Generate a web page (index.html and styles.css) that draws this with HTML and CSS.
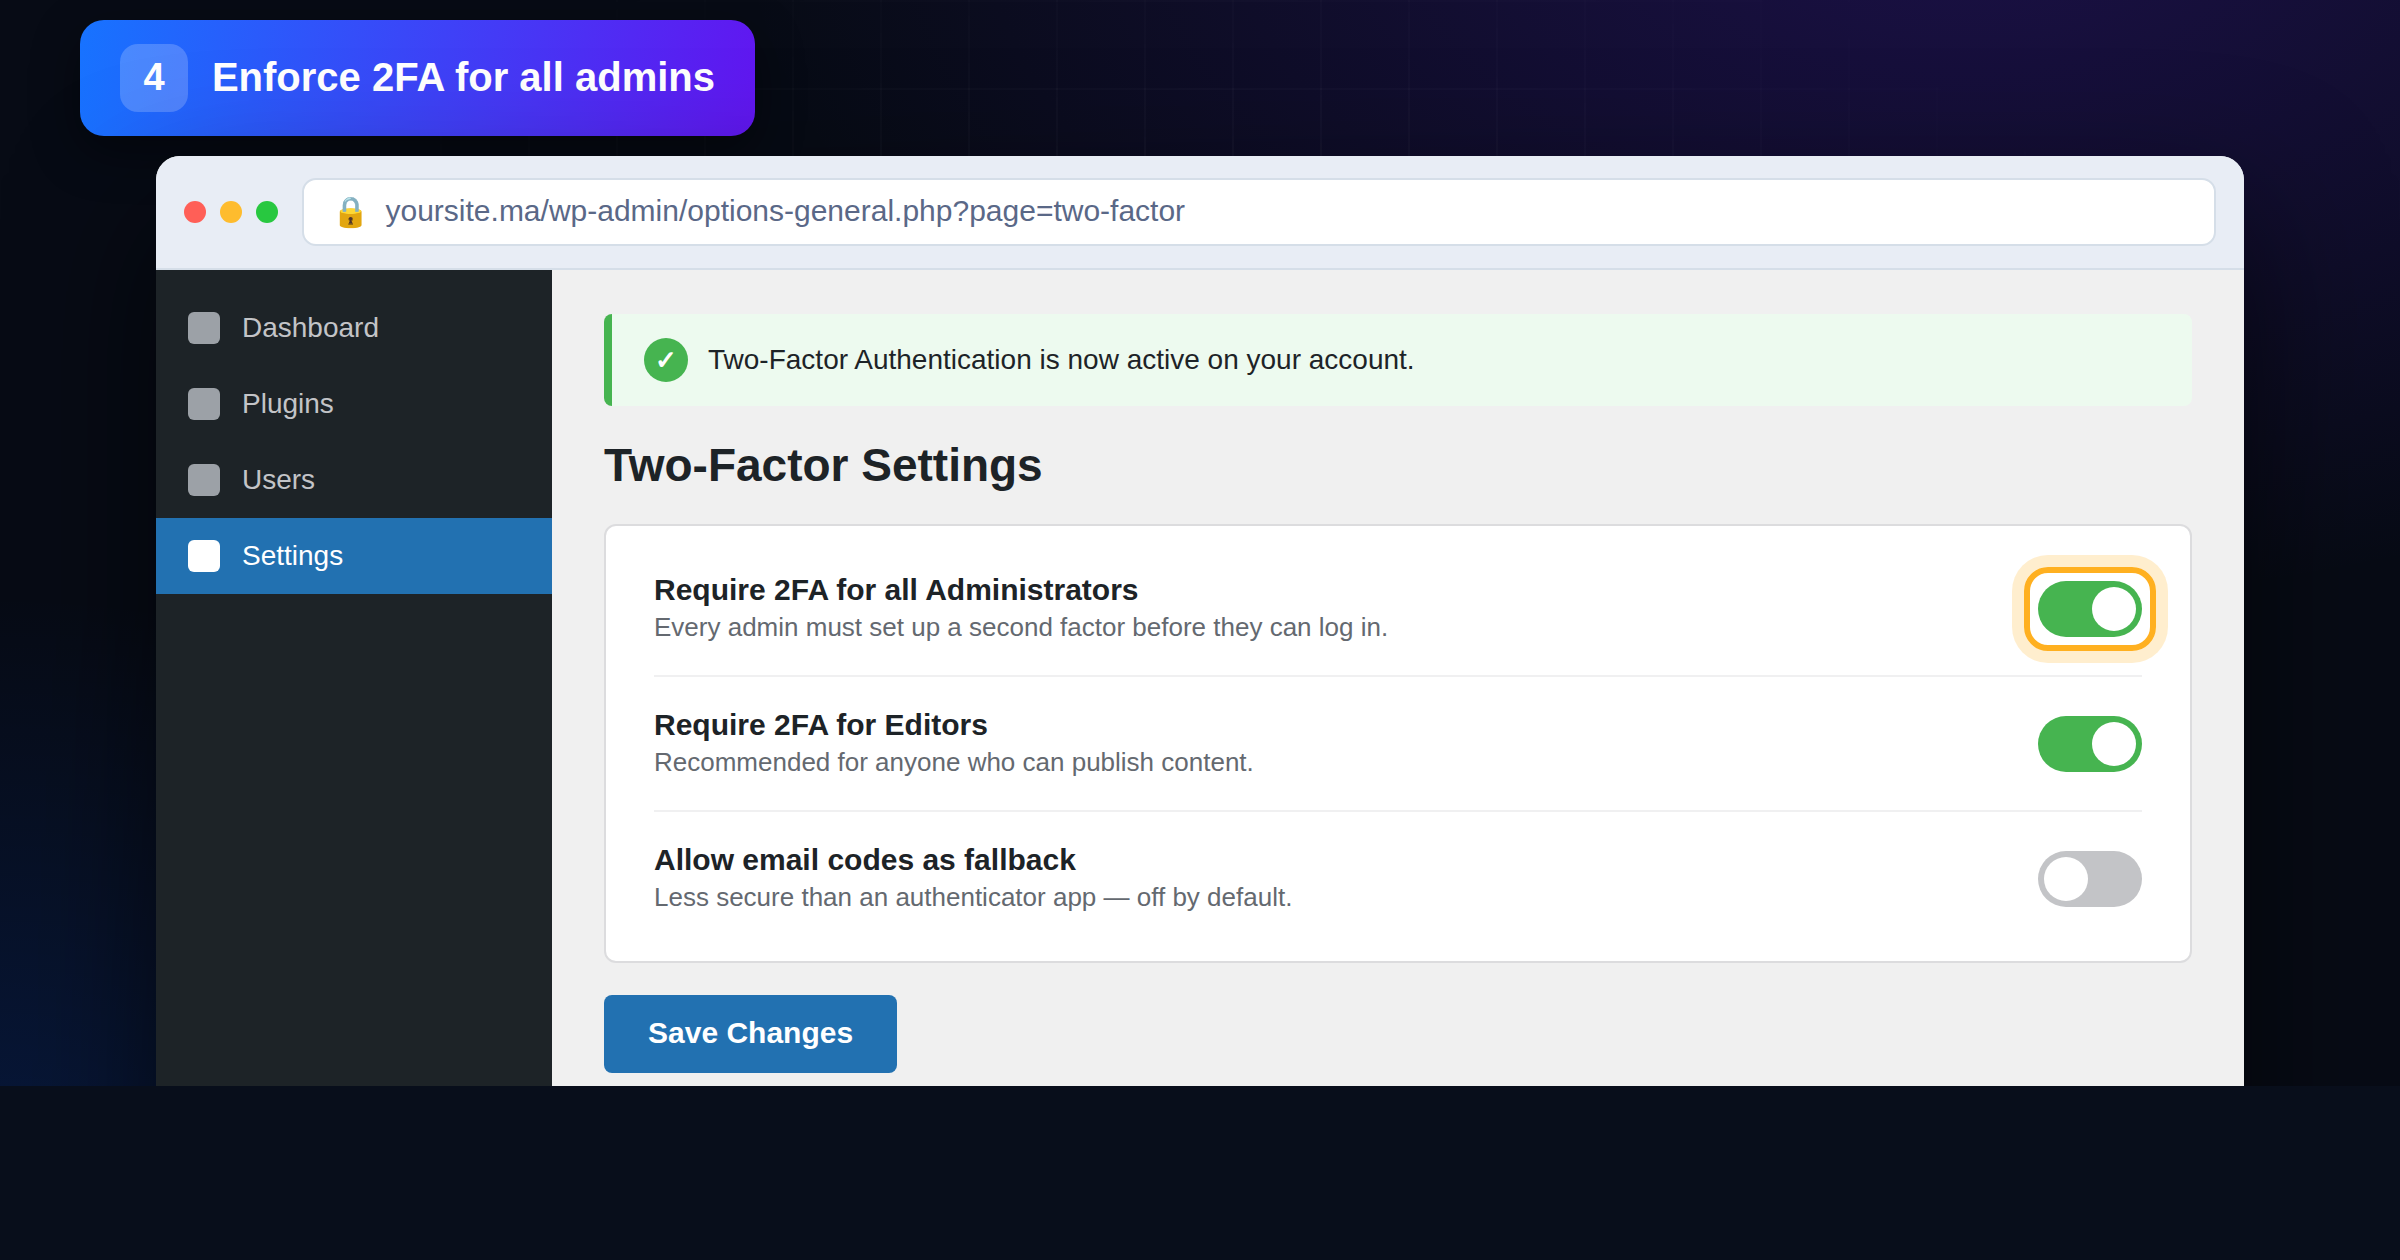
FILE: index.html
```html
<!DOCTYPE html>
<html lang="en">
<head>
<meta charset="utf-8">
<title>Two-Factor Settings</title>
<link rel="stylesheet" href="styles.css">
</head>
<body>
<div class="stage">
  <div class="grid"></div>
  <div class="step"><span class="step-num">4</span><span class="step-title">Enforce 2FA for all admins</span></div>
  <div class="browser">
    <div class="toolbar">
      <div class="dots"><i class="dot red"></i><i class="dot yellow"></i><i class="dot green"></i></div>
      <div class="url"><span class="lock">🔒</span><span>yoursite.ma/wp-admin/options-general.php?page=two-factor</span></div>
    </div>
    <div class="admin">
      <nav class="sidebar">
        <a class="item"><i class="icon"></i>Dashboard</a>
        <a class="item"><i class="icon"></i>Plugins</a>
        <a class="item"><i class="icon"></i>Users</a>
        <a class="item active"><i class="icon"></i>Settings</a>
      </nav>
      <main class="content">
        <div class="notice"><span class="check">✓</span><span>Two-Factor Authentication is now active on your account.</span></div>
        <h1 class="title">Two-Factor Settings</h1>
        <section class="card">
          <div class="row">
            <div><div class="name">Require 2FA for all Administrators</div><div class="desc">Every admin must set up a second factor before they can log in.</div></div>
            <div class="toggle on highlight"><i class="knob"></i></div>
          </div>
          <div class="row">
            <div><div class="name">Require 2FA for Editors</div><div class="desc">Recommended for anyone who can publish content.</div></div>
            <div class="toggle on"><i class="knob"></i></div>
          </div>
          <div class="row">
            <div><div class="name">Allow email codes as fallback</div><div class="desc">Less secure than an authenticator app — off by default.</div></div>
            <div class="toggle"><i class="knob"></i></div>
          </div>
        </section>
        <button class="save">Save Changes</button>
      </main>
    </div>
  </div>
</div>
</body>
</html>
```
FILE: styles.css
```css
* { box-sizing: border-box; }

body {
  margin: 0;
  height: 1260px;
  overflow: hidden;
  background: #080e1b;
  font-family: "Liberation Sans", Arial, sans-serif;
}

.stage {
  position: relative;
  height: 1086px;
  padding: 20px 156px 0 80px;
  overflow: hidden;
  background:
    radial-gradient(1900px 1100px at 82% -10%, rgba(91, 33, 232, 0.24), transparent 65%),
    radial-gradient(1300px 1000px at 0% 110%, rgba(10, 90, 255, 0.17), transparent 60%),
    #070b15;
}

.grid {
  position: absolute;
  inset: 0;
  background-image:
    linear-gradient(rgba(255, 255, 255, 0.035) 2px, transparent 2px),
    linear-gradient(90deg, rgba(255, 255, 255, 0.035) 2px, transparent 2px);
  background-size: 88px 88px;
  -webkit-mask-image: radial-gradient(ellipse at 50% 40%, #000 20%, transparent 65%);
  mask-image: radial-gradient(ellipse at 50% 40%, #000 20%, transparent 65%);
}

.step {
  position: relative;
  display: flex;
  align-items: center;
  gap: 24px;
  width: 675px;
  height: 116px;
  padding: 24px 40px;
  border-radius: 24px;
  background: linear-gradient(100deg, #1773ff, #6116f0);
  box-shadow: 0 16px 48px rgba(0, 0, 0, 0.4);
  color: #fff;
  font-weight: 700;
  white-space: nowrap;
}

.step-num {
  display: flex;
  align-items: center;
  justify-content: center;
  width: 68px;
  height: 68px;
  padding-bottom: 2px;
  border-radius: 18px;
  background: rgba(255, 255, 255, 0.2);
  font-size: 38px;
}

.step-title { padding-bottom: 2px; font-size: 40px; }

.browser {
  position: relative;
  margin: 20px 0 0 76px;
  height: 1100px;
  display: flex;
  flex-direction: column;
  overflow: hidden;
  border-radius: 24px;
  background: #f0f0f0;
  box-shadow: 0 60px 140px rgba(0, 0, 0, 0.6);
}

.toolbar {
  display: flex;
  align-items: center;
  gap: 24px;
  height: 114px;
  padding: 0 28px;
  background: #e8edf5;
  border-bottom: 2px solid #d5dee8;
}

.dots { display: flex; gap: 14px; }
.dot { width: 22px; height: 22px; border-radius: 50%; }
.red { background: #ff5f57; }
.yellow { background: #febc2e; }
.green { background: #28c840; }

.url {
  flex: 1;
  display: flex;
  align-items: center;
  gap: 16.5px;
  height: 68px;
  padding: 0 28px 2px;
  border: 2px solid #d5dee8;
  border-radius: 14px;
  background: #fff;
  color: #5a6887;
  font-size: 30px;
}

.lock { font-size: 30px; }

.admin { flex: 1; display: flex; }

.sidebar {
  width: 396px;
  padding-top: 20px;
  background: #1d2327;
}

.item {
  display: flex;
  align-items: center;
  gap: 22px;
  height: 76px;
  padding: 0 32px;
  color: #c3c4c7;
  font-size: 28px;
}

.icon {
  width: 32px;
  height: 32px;
  border-radius: 6px;
  background: #9ca1a7;
}

.active { background: #2271b1; color: #fff; }
.active .icon { background: #fff; }

.content { flex: 1; padding: 44px 52px; }

.notice {
  display: flex;
  align-items: center;
  gap: 20px;
  height: 92px;
  padding: 0 32px;
  border-left: 8px solid #46b450;
  border-radius: 8px;
  background: #edfaef;
  color: #1d2327;
  font-size: 28px;
}

.check {
  display: flex;
  align-items: center;
  justify-content: center;
  width: 44px;
  height: 44px;
  border-radius: 50%;
  background: #46b450;
  color: #fff;
  font-size: 26px;
  font-weight: 700;
}

.title {
  margin: 32px 0 32px;
  line-height: 54px;
  font-size: 46px;
  color: #1d2327;
}

.card {
  padding: 16px 48px;
  border: 2px solid #dcdcde;
  border-radius: 12px;
  background: #fff;
}

.row {
  display: flex;
  align-items: center;
  justify-content: space-between;
  height: 135px;
  border-bottom: 2px solid #f0f0f1;
}

.row:last-child { height: 133px; border-bottom: 0; }

.name {
  line-height: 34px;
  font-size: 30px;
  font-weight: 700;
  color: #1d2327;
}

.desc {
  margin: 5px 0 3px;
  line-height: 30px;
  font-size: 26px;
  color: #646970;
}

.toggle {
  position: relative;
  display: flex;
  width: 104px;
  height: 56px;
  padding: 6px;
  border-radius: 28px;
  background: #c3c4c7;
}

.toggle.on { justify-content: flex-end; background: #46b450; }

.knob { width: 44px; height: 44px; border-radius: 50%; background: #fff; }

/* Focus ring drawn around the setting being explained */
.highlight::after {
  content: "";
  position: absolute;
  inset: -14px;
  border: 6px solid #ffb020;
  border-radius: 24px;
  box-shadow: 0 0 0 12px rgba(255, 176, 32, 0.22);
}

.save {
  display: block;
  margin-top: 32px;
  height: 78px;
  padding: 0 44px 2px;
  border: 0;
  border-radius: 8px;
  background: #2271b1;
  color: #fff;
  font: 700 30px "Liberation Sans", Arial, sans-serif;
}
```
